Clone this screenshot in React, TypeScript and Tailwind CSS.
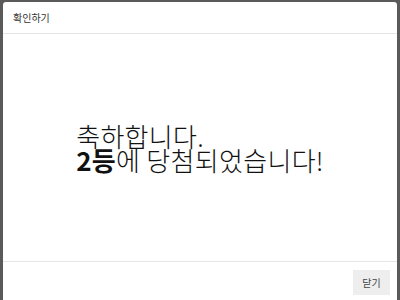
export default function App() {
  return (
    <div
      className="w-[400px] h-[300px] overflow-hidden bg-[#5a5a5a] pl-[3px] pr-[3px] pt-[2px]"
      style={{ fontFamily: '"Noto Sans CJK KR", "Noto Sans", sans-serif' }}
    >
      <div className="h-[310px] bg-white rounded-t-[3px] flex flex-col">
        {/* Header */}
        <div className="h-[32px] flex items-center px-[10px] border-b border-[#e5e5e5]">
          <span className="text-[10px] text-[#333]">확인하기</span>
        </div>

        {/* Body */}
        <div className="h-[228px] flex items-center justify-center border-b border-[#e5e5e5]">
          <div className="text-[26px] leading-[24px] text-[#111] tracking-[0.3px] font-light">
            <p>축하합니다.</p>
            <p>
              <b className="font-bold">2등</b>에 당첨되었습니다!
            </p>
          </div>
        </div>

        {/* Footer */}
        <div className="flex justify-end pt-[8px] pr-[7px]">
          <button className="w-[37px] h-[25px] bg-[#eeeeee] text-[10px] text-[#444]">
            닫기
          </button>
        </div>
      </div>
    </div>
  );
}
